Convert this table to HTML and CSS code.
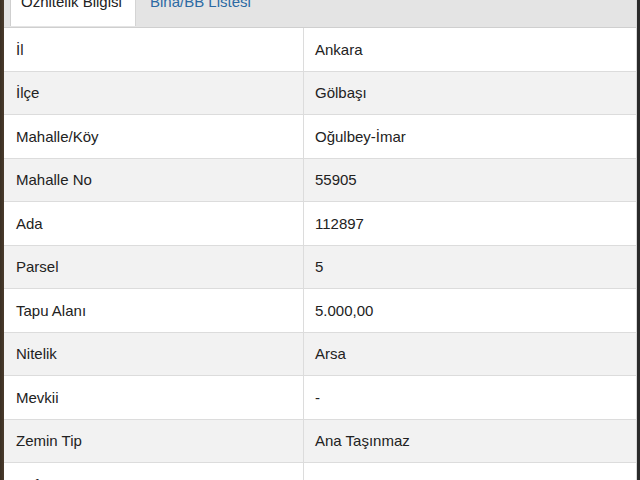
FILE: index.html
```html
<!DOCTYPE html>
<html lang="tr">
<head>
<meta charset="utf-8">
<title>Öznitelik Bilgisi</title>
<link rel="stylesheet" href="styles.css">
</head>
<body>
<div class="frame">
  <div class="panel">
    <div class="tabs">
      <div class="tab active">Öznitelik Bilgisi</div>
      <div class="tab link">Bina/BB Listesi</div>
    </div>
    <table class="attrs">
      <tr><td>İl</td><td>Ankara</td></tr>
      <tr><td>İlçe</td><td>Gölbaşı</td></tr>
      <tr><td>Mahalle/Köy</td><td>Oğulbey-İmar</td></tr>
      <tr><td>Mahalle No</td><td>55905</td></tr>
      <tr><td>Ada</td><td>112897</td></tr>
      <tr><td>Parsel</td><td>5</td></tr>
      <tr><td>Tapu Alanı</td><td>5.000,00</td></tr>
      <tr><td>Nitelik</td><td>Arsa</td></tr>
      <tr><td>Mevkii</td><td>-</td></tr>
      <tr><td>Zemin Tip</td><td>Ana Taşınmaz</td></tr>
      <tr><td>Pafta</td><td></td></tr>
    </table>
  </div>
</div>
</body>
</html>
```

FILE: styles.css
```css
html, body {
  margin: 0;
  padding: 0;
  width: 640px;
  height: 480px;
  overflow: hidden;
  background: #2f261d;
}
.frame {
  display: flex;
  height: 480px;
  padding: 0 3px 0 4px;
  background: linear-gradient(90deg, #3a2f23 0, #4a3b2c 4px, #2a2a2a 4px);
}
.panel {
  flex: 1;
  background: #ffffff;
  font-family: "Liberation Sans", Arial, sans-serif;
  font-size: 15px;
  color: #222222;
  border-right: 1px solid #d8d8d8;
}
.tabs {
  display: flex;
  height: 27px;
  padding-left: 6px;
  background: #e4e4e4;
  border-bottom: 1px solid #cfcfcf;
  align-items: flex-start;
}
.tab {
  padding: 0 10px;
  line-height: 15px;
  height: 32px;
  margin-top: -6px;
}
.tab.active {
  background: #ffffff;
  border-left: 1px solid #cfcfcf;
  border-right: 1px solid #d4d4d4;
  width: 104px;
}
.tab.link {
  color: #2c6aa3;
  margin-left: 4px;
}
.attrs {
  width: 100%;
  border-collapse: collapse;
}
.attrs td {
  height: 42.5px;
  padding: 0 11px;
  border-bottom: 1px solid #dcdcdc;
  vertical-align: middle;
}
.attrs td:first-child {
  width: 276px;
  padding-left: 12px;
  border-right: 1px solid #dcdcdc;
}
.attrs tr:nth-child(even) td {
  background: #f2f2f2;
}
```
